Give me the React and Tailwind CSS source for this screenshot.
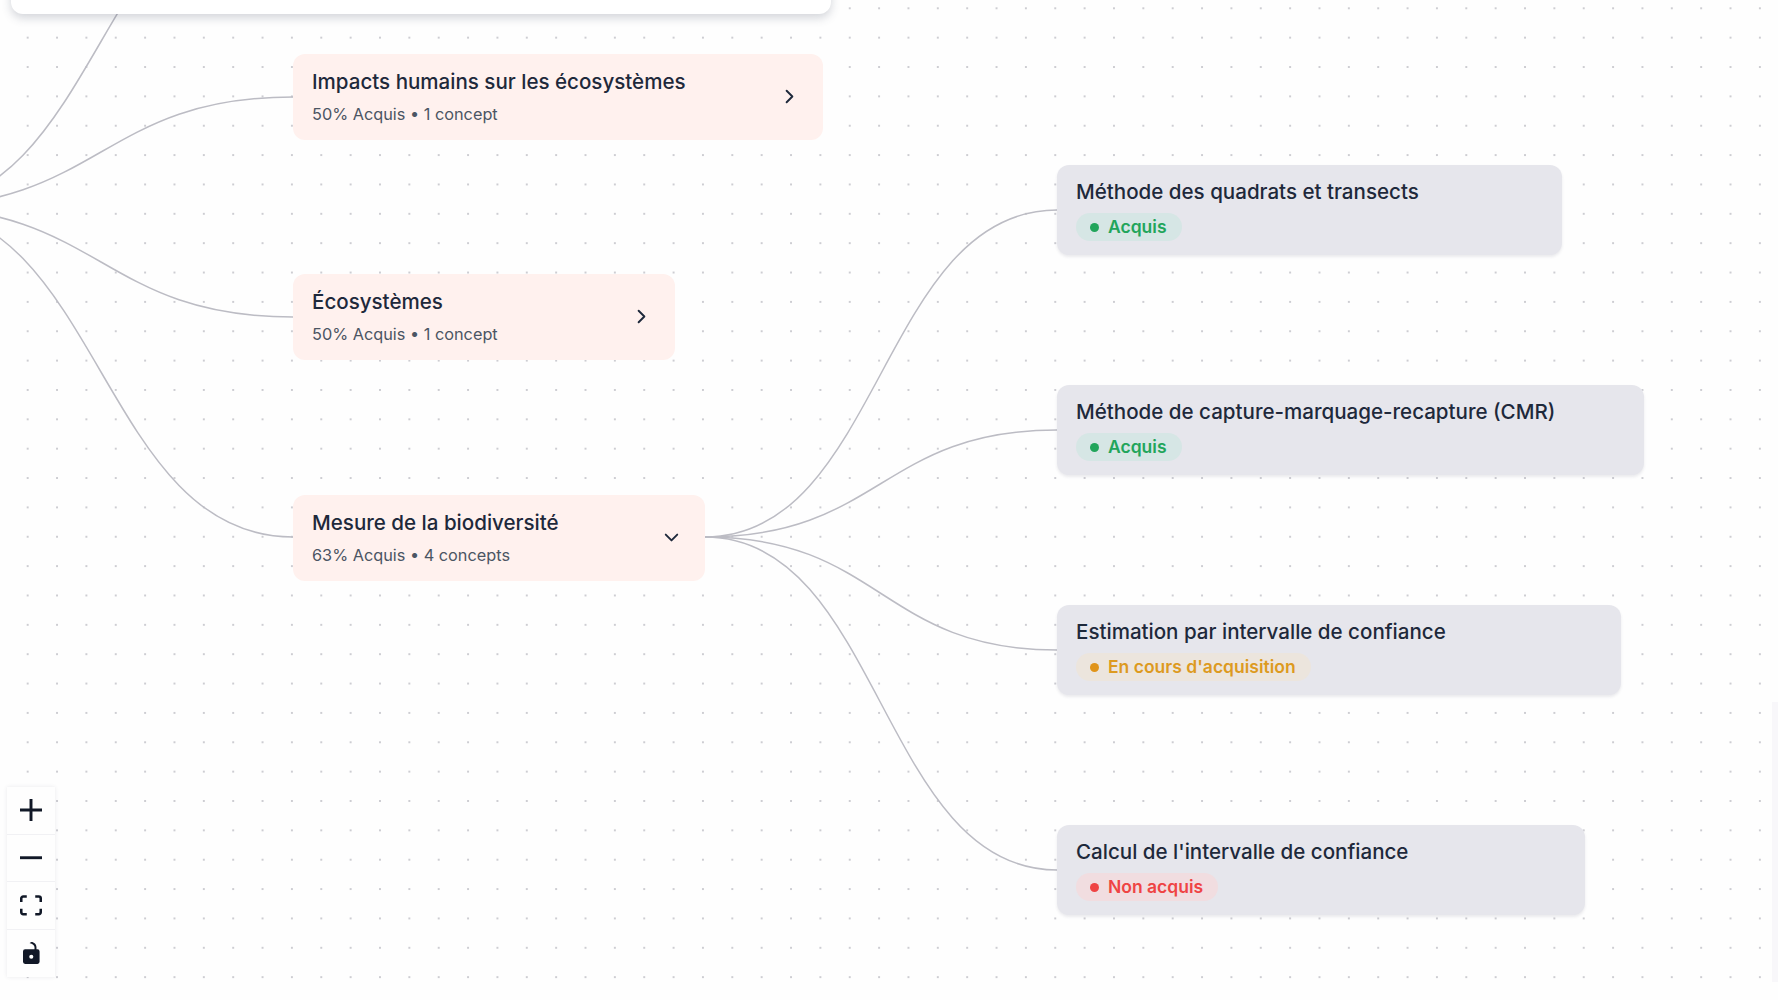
import { ChevronRight, ChevronDown } from 'lucide-react'

const groups = [
  { title: 'Impacts humains sur les écosystèmes', sub: '50% Acquis • 1 concept', x: 293, y: 54, w: 530 },
  { title: 'Écosystèmes', sub: '50% Acquis • 1 concept', x: 293, y: 274, w: 382 },
  { title: 'Mesure de la biodiversité', sub: '63% Acquis • 4 concepts', x: 293, y: 495, w: 412, open: true },
]

const badgeStyles = {
  ok: { label: 'Acquis', box: 'bg-[#d6e6e5] text-[#22a55b]', dot: 'bg-[#22a55b]' },
  mid: { label: "En cours d'acquisition", box: 'bg-[#ece5dd] text-[#dd9a1f]', dot: 'bg-[#e0941a]' },
  ko: { label: 'Non acquis', box: 'bg-[#f1dde0] text-[#ef4444]', dot: 'bg-[#ef4444]' },
}

const concepts = [
  { title: 'Méthode des quadrats et transects', status: 'ok', x: 1057, y: 165, w: 505 },
  { title: 'Méthode de capture-marquage-recapture (CMR)', status: 'ok', x: 1057, y: 385, w: 587 },
  { title: 'Estimation par intervalle de confiance', status: 'mid', x: 1057, y: 605, w: 564 },
  { title: "Calcul de l'intervalle de confiance", status: 'ko', x: 1057, y: 825, w: 528 },
]

// same curve shape as a flow diagram edge: control points at the middle x
function edge(sx, sy, tx, ty) {
  const mx = (sx + tx) / 2
  return `M${sx},${sy} C${mx},${sy} ${mx},${ty} ${tx},${ty}`
}

const edges = [
  edge(-91, 207, 293, -124),
  edge(-91, 207, 293, 97),
  edge(-91, 207, 293, 317),
  edge(-91, 207, 293, 537),
  edge(705, 537, 1057, 210),
  edge(705, 537, 1057, 430),
  edge(705, 537, 1057, 650),
  edge(705, 537, 1057, 870),
]

function GroupNode({ node }) {
  const Icon = node.open ? ChevronDown : ChevronRight
  return (
    <div
      className="absolute flex items-center justify-between pl-[19px] pr-[22px] h-[86px] rounded-xl bg-[#fff1ee]"
      style={{ left: node.x, top: node.y, width: node.w }}
    >
      <div>
        <div className="text-[20.56px] leading-[27px] font-medium text-[#1e293b]">{node.title}</div>
        <div className="mt-[7px] text-[16.3px] leading-[24px] text-[#4b5563]">{node.sub}</div>
      </div>
      <Icon size={23} strokeWidth={2} className="text-[#1e293b] shrink-0 mb-[2px]" />
    </div>
  )
}

function ConceptNode({ node }) {
  const badge = badgeStyles[node.status]
  return (
    <div
      className="absolute flex flex-col items-start pl-[19px] pt-[13px] h-[90px] rounded-xl bg-[#e6e6ec] shadow-[0_2px_3px_rgba(60,60,90,0.1)]"
      style={{ left: node.x, top: node.y, width: node.w }}
    >
      <div className="text-[20.56px] leading-[27px] font-medium text-[#1e293b]">{node.title}</div>
      <div className={`mt-[8px] flex items-center gap-[9px] h-[28px] pl-[14px] pr-[15px] rounded-full text-[17.5px] font-semibold ${badge.box}`}>
        <span className={`w-[9px] h-[9px] rounded-full ${badge.dot}`} />
        {badge.label}
      </div>
    </div>
  )
}

function Controls() {
  const btn = 'flex items-center justify-center h-[47.5px] border-b border-[#f1f1f4] last:border-b-0'
  return (
    <div className="absolute left-[7px] top-[787px] w-[48px] flex flex-col bg-[#fefefe] shadow-[0_0_4px_rgba(60,60,90,0.1)]">
      <button type="button" className={btn}>
        <svg viewBox="0 0 32 32" className="w-[22px] h-[22px] fill-[#111827]">
          <path d="M32 18.133H18.133V32h-4.266V18.133H0v-4.266h13.867V0h4.266v13.867H32z" />
        </svg>
      </button>
      <button type="button" className={btn}>
        <svg viewBox="0 0 32 5" className="w-[22px] h-[4px] fill-[#111827]">
          <path d="M0 0h32v4.2H0z" />
        </svg>
      </button>
      <button type="button" className={btn}>
        <svg viewBox="0 0 32 30" className="w-[22px] h-[21px] fill-[#111827]">
          <path d="M3.692 4.63c0-.53.4-.938.939-.938h5.215V0H4.708C2.13 0 0 2.054 0 4.63v5.216h3.692V4.631zM27.354 0h-5.2v3.692h5.17c.53 0 .984.4.984.939v5.215H32V4.631A4.624 4.624 0 0027.354 0zm.954 24.83c0 .532-.4.94-.939.94h-5.215v3.768h5.215c2.577 0 4.631-2.13 4.631-4.707v-5.139h-3.692v5.139zm-23.677.94c-.531 0-.939-.4-.939-.94v-5.138H0v5.139c0 2.577 2.13 4.707 4.708 4.707h5.138V25.77H4.631z" />
        </svg>
      </button>
      <button type="button" className={btn}>
        <svg viewBox="0 0 25 32" className="w-[17px] h-[22px] fill-[#111827]">
          <path d="M21.333 10.667H19.81V7.619C19.81 3.429 16.38 0 12.19 0c-4.114 1.828-1.37 2.133.305 2.438 1.676.305 4.42 2.59 4.42 5.181v3.048H3.047A3.056 3.056 0 000 13.714v15.238A3.056 3.056 0 003.048 32h18.285a3.056 3.056 0 003.048-3.048V13.714a3.056 3.056 0 00-3.048-3.047zM12.19 24.533a3.056 3.056 0 01-3.047-3.047 3.056 3.056 0 013.047-3.048 3.056 3.056 0 013.048 3.048 3.056 3.056 0 01-3.048 3.047z" />
        </svg>
      </button>
    </div>
  )
}

export default function App() {
  return (
    <div className="relative w-[1778px] h-[1000px] overflow-hidden bg-[#fefefe] font-['Inter',sans-serif] bg-[radial-gradient(circle,#cdcdd2_1px,transparent_1.2px)] bg-size-[29.36px_29.36px] bg-position-[13px_-6.4px]">
      <svg className="absolute inset-0" width="1778" height="1000" fill="none">
        {edges.map(d => (
          <path key={d} d={d} stroke="#bcbcc4" strokeWidth="1.5" />
        ))}
      </svg>

      {/* bottom of the card above, cut off by the viewport */}
      <div className="absolute left-[11px] top-[-30px] w-[820px] h-[44px] rounded-xl bg-white shadow-[0_4px_10px_rgba(60,70,90,0.22)]" />

      {groups.map(n => <GroupNode key={n.title} node={n} />)}
      {concepts.map(n => <ConceptNode key={n.title} node={n} />)}

      <Controls />

      {/* scrollbar strip on the right edge */}
      <div className="absolute right-0 top-[702px] w-[6px] h-[280px] bg-[#f8f7fa]" />
    </div>
  )
}
